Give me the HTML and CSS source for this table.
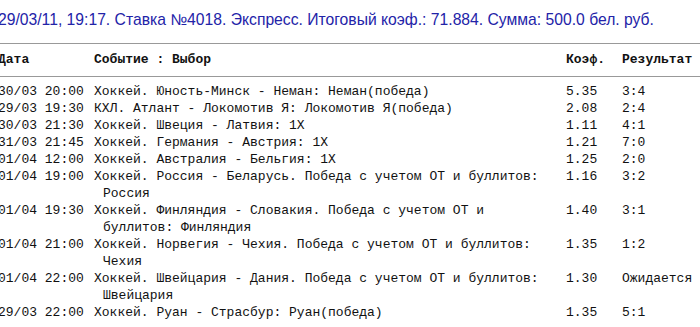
FILE: index.html
```html
<!DOCTYPE html>
<html>
<head>
<meta charset="utf-8">
<link rel="stylesheet" href="styles.css">
</head>
<body>
<div class="page">
  <h1 class="title">29/03/11, 19:17. Ставка №4018. Экспресс. Итоговый коэф.: 71.884. Сумма: 500.0 бел. руб.</h1>
  <table class="bets">
    <thead>
      <tr><th class="c-date">Дата</th><th class="c-event">Событие : Выбор</th><th class="c-coef">Коэф.</th><th class="c-res">Результат</th></tr>
    </thead>
    <tbody>
      <tr><td class="c-date">30/03 20:00</td><td class="c-event">Хоккей. Юность-Минск - Неман: Неман(победа)</td><td class="c-coef">5.35</td><td class="c-res">3:4</td></tr>
      <tr><td class="c-date">29/03 19:30</td><td class="c-event">КХЛ. Атлант - Локомотив Я: Локомотив Я(победа)</td><td class="c-coef">2.08</td><td class="c-res">2:4</td></tr>
      <tr><td class="c-date">30/03 21:30</td><td class="c-event">Хоккей. Швеция - Латвия: 1Х</td><td class="c-coef">1.11</td><td class="c-res">4:1</td></tr>
      <tr><td class="c-date">31/03 21:45</td><td class="c-event">Хоккей. Германия - Австрия: 1Х</td><td class="c-coef">1.21</td><td class="c-res">7:0</td></tr>
      <tr><td class="c-date">01/04 12:00</td><td class="c-event">Хоккей. Австралия - Бельгия: 1Х</td><td class="c-coef">1.25</td><td class="c-res">2:0</td></tr>
      <tr><td class="c-date">01/04 19:00</td><td class="c-event">Хоккей. Россия - Беларусь. Победа с учетом ОТ и буллитов: Россия</td><td class="c-coef">1.16</td><td class="c-res">3:2</td></tr>
      <tr><td class="c-date">01/04 19:30</td><td class="c-event">Хоккей. Финляндия - Словакия. Победа с учетом ОТ и буллитов: Финляндия</td><td class="c-coef">1.40</td><td class="c-res">3:1</td></tr>
      <tr><td class="c-date">01/04 21:00</td><td class="c-event">Хоккей. Норвегия - Чехия. Победа с учетом ОТ и буллитов: Чехия</td><td class="c-coef">1.35</td><td class="c-res">1:2</td></tr>
      <tr><td class="c-date">01/04 22:00</td><td class="c-event">Хоккей. Швейцария - Дания. Победа с учетом ОТ и буллитов: Швейцария</td><td class="c-coef">1.30</td><td class="c-res">Ожидается</td></tr>
      <tr><td class="c-date">29/03 22:00</td><td class="c-event">Хоккей. Руан - Страсбур: Руан(победа)</td><td class="c-coef">1.35</td><td class="c-res">5:1</td></tr>
    </tbody>
  </table>
</div>
</body>
</html>
```
FILE: styles.css
```css
html, body {
  margin: 0;
  padding: 0;
  background: #ffffff;
}
.page {
  margin-left: -2px;
  width: 720px;
}
.title {
  margin: 0;
  padding-top: 10px;
  height: 43px;
  box-sizing: border-box;
  font-family: "Liberation Sans", Arial, sans-serif;
  font-weight: normal;
  font-size: 15.7px;
  line-height: 19px;
  color: #2323a8;
  white-space: nowrap;
}
.bets {
  border-collapse: collapse;
  font-family: "Liberation Mono", "Courier New", monospace;
  font-size: 13px;
  color: #111;
  width: 702px;
  table-layout: fixed;
}
.bets th {
  font-weight: bold;
  text-align: left;
  padding: 7px 0 8px;
  line-height: 17px;
  border-top: 1px solid #999;
  border-bottom: 1px solid #999;
}
.bets td {
  padding: 0;
  line-height: 17px;
  vertical-align: top;
}
.bets tbody tr:first-child td {
  padding-top: 6px;
}
.c-date { width: 96px; }
.c-event { width: 472px; }
.c-coef { width: 56px; }
.c-res { width: auto; }
td.c-event {
  padding-left: 9px !important;
  text-indent: -9px;
  padding-right: 4px !important;
}
th.c-event {
  padding-left: 0;
}
```
